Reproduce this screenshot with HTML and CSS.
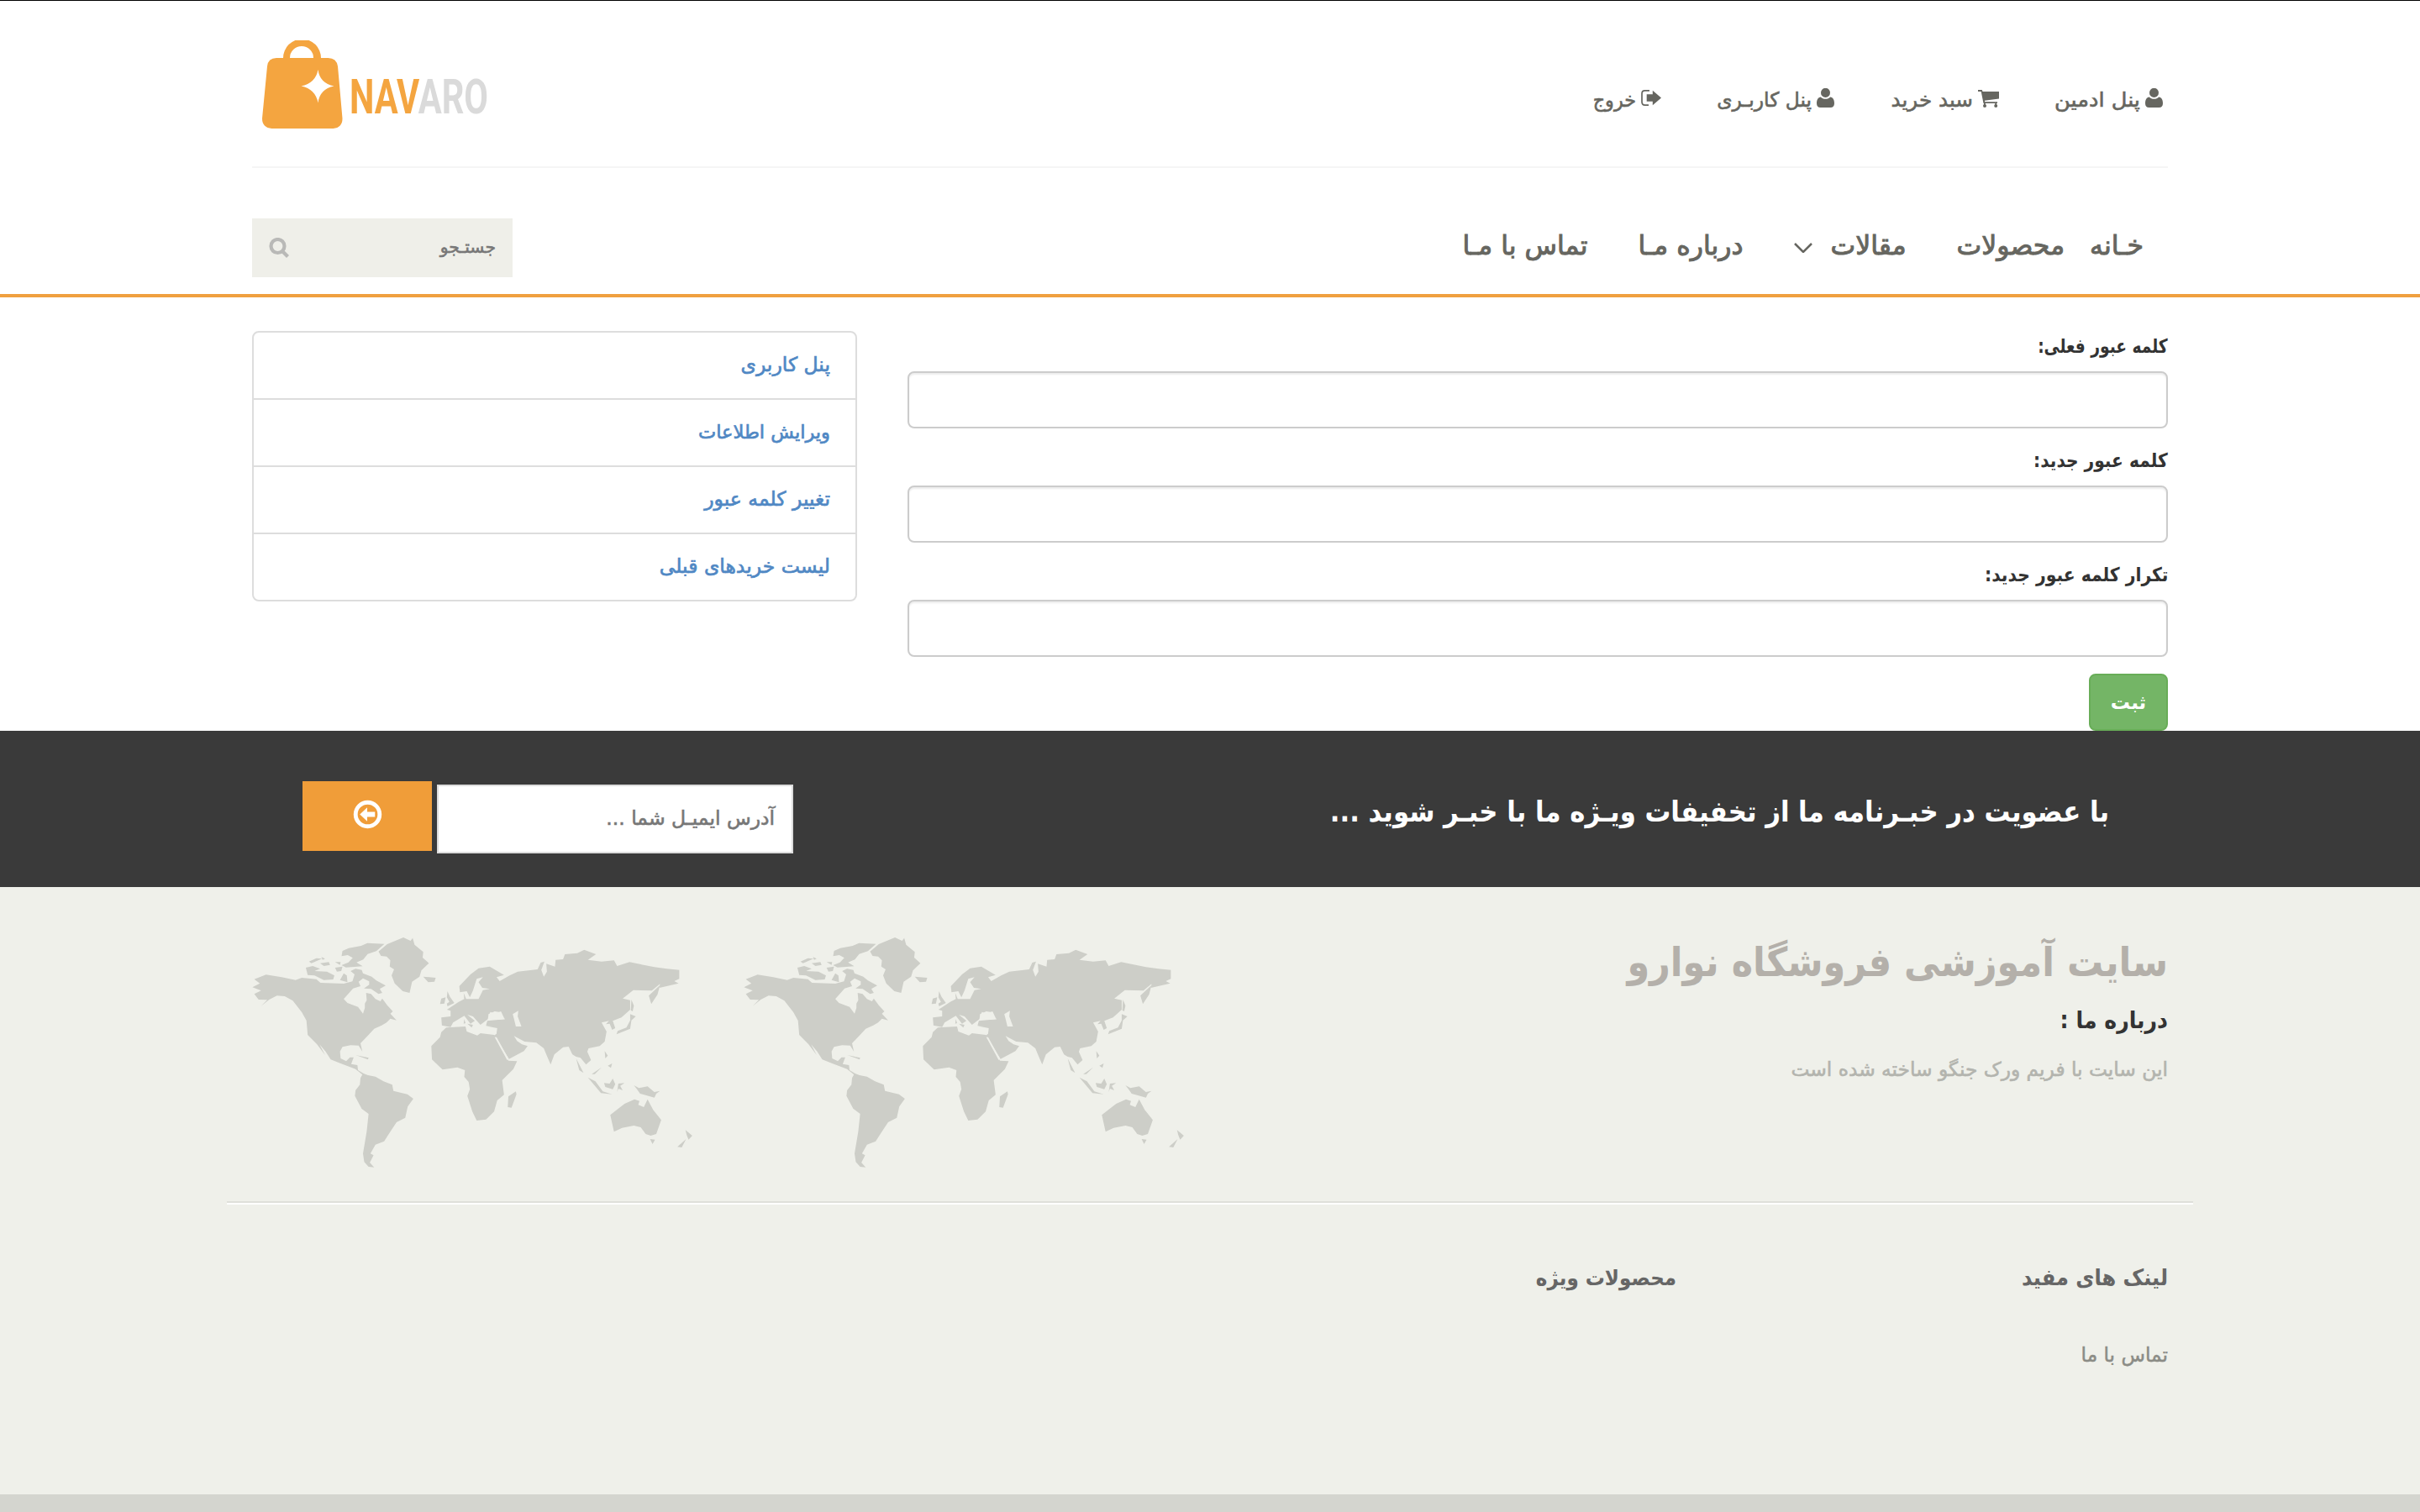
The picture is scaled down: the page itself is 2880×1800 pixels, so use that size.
FILE: index.html
```html
<!DOCTYPE html>
<html lang="fa" dir="rtl">
<head>
<meta charset="utf-8">
<title>NAVARO</title>
<link rel="stylesheet" href="styles.css">
</head>
<body>
<svg class="defs" aria-hidden="true">
  <symbol id="user" viewBox="0 0 21 23"><ellipse cx="10.5" cy="5.4" rx="5.5" ry="5.6"/><path d="M4.8 10.4C1.8 10.6 0 13.600 0 18c0 3.200 1.700 5 4.500 5h12c2.800 0 4.500-1.800 4.500-5 0-4.400-1.800-7.400-4.800-7.600-1.500 1.500-3.400 2.300-5.700 2.300s-4.200-.8-5.700-2.300z"/></symbol>
  <symbol id="cart" viewBox="0 0 25 21"><path d="M0 0h4.800l.7 2H25v8.600L7.900 12.700l.3 1.600H23v1.800H6.500L3.700 1.900H0z"/><circle cx="8" cy="19" r="2"/><circle cx="21.200" cy="19" r="2"/><path d="M7 15h1.800v3H7zM20.300 15h1.800v3h-1.800z"/></symbol>
  <symbol id="exit" viewBox="0 0 24 19"><path d="M10 .9H4.500Q1 .9 1 4.500v9.700q0 3.900 3.500 3.900H9" fill="none" stroke="currentColor" stroke-width="1.700"/><path d="M6.700 5.300h7.100V.8L24 9.500l-10.200 8.700v-4.500H6.700z"/></symbol>
  <symbol id="world" viewBox="55 48 1420 822" preserveAspectRatio="none">
    <path d="M62 197L100 181 150 190 195 200 215 192 262 197 275 210 350 213 378 205 385 180 372 168 388 160 408 164 412 176 440 188 455 202 485 220 466 232 474 246 462 250 438 232 415 230 432 217 432 205 412 194 398 206 404 222 380 230 350 268 362 282 396 296 412 320 418 300 418 284 424 272 422 246 438 250 452 268 468 276 474 266 490 290 508 312 500 320 520 344 500 338 488 352 472 362 448 374 428 398 404 426 410 456 398 434 372 433 346 439 338 455 340 480 358 490 370 476 382 476 374 500 394 504 396 522 414 534 428 540 452 545 478 562 506 574 510 596 555 608 574 624 556 652 548 692 520 708 492 755 480 776 452 788 436 820 446 826 434 852 448 869 430 867 416 850 412 820 424 740 430 678 408 660 386 614 388 594 402 574 404 550 410 538 388 518 340 498 308 484 292 456 272 430 290 468 264 430 234 396 230 345 215 315 186 274 160 258 135 256 110 270 84 293 104 271 76 270 62 250 84 238 56 226 80 212z"/>
    <path d="M462 98L490 72 542 48 565 60 572 50 578 74 606 100 604 120 624 140 600 166 594 188 570 206 562 246 540 240 514 212 504 184 512 162 498 152 500 130 488 116 470 114zM606 188l40 4-4 14-20 2zM228 156l22-6 24 10-18 8 40 2 24 14-4 14-30 2-30-16-22-2zM238 134l24-12 18 2-34 16zM274 140l28-4 4 10-20 4zM278 118l12 6-8 4zM322 136l18 0-2 10zM322 156l24-4-4 16-14 2zM350 176l10 8 2 24-24-8zM346 96l20-10 40-8 20-10 55 3-26 26-28 10-14 20-22 10 20 14-54 4-14-8 22-10 14-16-16-10-20 4z"/>
    <path d="M664 334L694 330 694 310 682 306 720 278 738 268 736 246 744 268 784 268 798 236 820 232 796 228 784 208 798 190 778 196 766 238 756 262 746 240 724 244 722 222 758 180 784 158 820 152 866 182 842 190 852 204 884 184 910 170 974 162 984 138 996 134 986 164 994 188 1004 170 1002 142 1030 152 1032 128 1056 126 1062 108 1102 104 1124 92 1162 108 1136 128 1180 134 1220 130 1230 150 1270 136 1350 154 1390 160 1430 164 1430 196 1414 204 1428 212 1366 228 1368 214 1342 238 1282 236 1248 266 1272 272 1272 306 1244 334 1216 346 1224 372 1214 378 1206 356 1194 358 1204 346 1180 352 1196 384 1190 420 1174 436 1138 444 1134 456 1146 486 1130 502 1112 478 1098 474 1086 466 1074 438 1056 440 1028 466 1016 502 1002 466 994 444 970 424 932 420 898 400 908 418 924 430 942 436 930 454 882 482 838 406 848 370 808 362 812 346 868 340 856 312 836 320 822 314 814 340 790 360 766 330 748 324 772 346 758 356 738 328 702 352 694 368 666 362z"/>
    <path d="M680 370L742 366 746 384 780 398 790 390 834 396 880 488 908 490 896 518 860 558 866 610 844 630 834 670 808 698 778 702 764 670 748 614 756 590 752 564 738 546 740 522 716 512 668 520 634 484 632 436 660 404 664 386zM806 364L850 364 850 420 834 398 842 392 844 372zM904 598l2 10-16 48-12-2 2-38zM684 240l8 20 14 22-22 12-2-10 8-6-8-16zM664 266l14-4-4 22-14 2zM1368 218l-8 34-20 34-8-30zM1276 270l8 22-4 20-6-4zM1272 322l18 8-14 14-4 30-44 20 4-12 28-12 12-26zM1190 454l10 16-8 10zM1214 498l-4 16-10-8zM1180 512l-22 24-10 0zM1098 480l24 52-14-10zM1136 548l24 14 24 36 30 10-36-4zM1216 552l8 20-8 18-24-8-4-14 18 2zM1234 570l20-2-14 10 8 16-14-6-4 12zM1284 576l16 10 28-6 28 26-6 14-26-8-20-6-10-16zM1350 600l18-4-12 10zM388 468l42 10-2 6-30-12zM738 340l4 14-6 2zM748 356l18 4-4 10z"/>
    <path d="M1208 682L1254 642 1286 626 1302 632 1298 646 1316 654 1328 626 1346 664 1372 700 1356 750 1338 756 1322 750 1306 726 1284 720 1246 728 1220 742zM1336 768l16 2-8 16zM1450 736l22 20-12 14-6-16zM1452 768l-14 30-14-2z"/>
    <g class="sea"><path d="M816 322l20-10 22 4-6 12 18 12-22 2-34 0zM894 322l18-12-2 20 12 36-18 0-6-28zM836 404l6 0 38 76-4 6z"/></g>
  </symbol>
</svg>

<header class="header">
  <div class="container">
    <div class="topbar">
      <nav class="links">
        <a><svg class="i-user"><use href="#user"/></svg><span class="w-admin">پنل ادمین</span></a>
        <a><svg class="i-cart"><use href="#cart"/></svg><span class="w-basket">سبد خرید</span></a>
        <a><svg class="i-user"><use href="#user"/></svg><span class="w-panel">پنل کاربـری</span></a>
        <a><svg class="i-exit"><use href="#exit"/></svg><span class="w-exit">خروج</span></a>
      </nav>
      <svg class="logo" viewBox="0 0 280 110">
        <path class="bag" fill-rule="evenodd" d="M25 21a22.500 22.500 0 0 1 45 0h8.500q10 0 11.500 10l5.500 62q0 11-11 12H11.500Q0 104 0 93L6 31q1-10 11-10zm8 0h28a14 14 0 0 0-28 0z"/>
        <path class="star" d="M66.500 35q2 16 19 19.500-17 3.500-19 20-3-16.500-20-20 17-3.500 20-19.500z"/>
        <text x="104" y="87" textLength="165" lengthAdjust="spacingAndGlyphs">NAV<tspan>ARO</tspan></text>
      </svg>
    </div>
    <div class="menubar">
      <ul class="menu">
        <li>خـانه</li>
        <li class="near">محصولات</li>
        <li>مقالات<svg class="chevron" viewBox="0 0 22 12"><path d="M1 1l10 10L21 1"/></svg></li>
        <li>درباره مـا</li>
        <li>تماس با مـا</li>
      </ul>
      <div class="search"><span>جستـجو</span>
        <svg viewBox="0 0 24 24"><circle cx="10.500" cy="10" r="8"/><path d="M16 16l6.500 6.500"/></svg>
      </div>
    </div>
  </div>
</header>

<main class="container main">
  <form class="form">
    <label><span class="w-l1">کلمه عبور فعلی:</span></label><input type="password">
    <label><span class="w-l2">کلمه عبور جدید:</span></label><input type="password">
    <label><span class="w-l3">تکرار کلمه عبور جدید:</span></label><input type="password">
    <button class="submit" type="button">ثبت</button>
  </form>
  <ul class="side">
    <li>پنل کاربری</li>
    <li class="tight">ویرایش اطلاعات</li>
    <li>تغییر کلمه عبور</li>
    <li>لیست خریدهای قبلی</li>
  </ul>
</main>

<section class="news">
  <div class="container news-row">
    <h2>با عضویت در خبـرنامه ما از تخفیفات ویـژه ما با خبـر شوید ...</h2>
    <div class="subscribe">
      <div class="email">آدرس ایمیـل شما ...</div>
      <div class="go"><svg viewBox="0 0 36 36"><circle cx="18" cy="18" r="14.700"/><path d="M8.500 18l9-8.500v5.500h9.500v6h-9.500v5.500z"/></svg></div>
    </div>
  </div>
</section>

<footer class="footer">
  <div class="container about-row">
    <div class="about">
      <h1>سایت آموزشی فروشگاه نوارو</h1>
      <h3>درباره ما :</h3>
      <p>این سایت با فریم ورک جنگو ساخته شده است</p>
    </div>
    <svg class="map"><use href="#world"/></svg>
    <svg class="map"><use href="#world"/></svg>
  </div>
  <div class="rule"></div>
  <div class="container cols">
    <div class="col"><h4 class="wide">لینک های مفید</h4><a>تماس با ما</a></div>
    <div class="col"><h4>محصولات ویژه</h4></div>
  </div>
</footer>
<div class="bottom"></div>
</body>
</html>
```
FILE: styles.css
```css
* { box-sizing: border-box; margin: 0; padding: 0; }
html, body { height: 1800px; overflow: hidden; }
body {
  background: #fff;
  color: #333;
  font-family: "DejaVu Sans", sans-serif;
  font-size: 24px;
  white-space: nowrap;
  border-top: 1px solid #000;
}
ul { list-style: none; }
svg { display: block; flex: none; fill: currentColor; }
.defs { position: absolute; width: 0; height: 0; }
.container { width: 2280px; margin: 0 auto; }

/* header */
.header { height: 353px; border-bottom: 4px solid #f0a03f; }
.topbar {
  display: flex;
  justify-content: space-between;
  height: 199px;
  padding: 0 6px 0 12px;
  border-bottom: 2px solid #f5f5f5;
}
.links { display: flex; gap: 66.500px; padding-top: 103px; color: #666660; }
.links a { display: flex; gap: 6px; height: 30px; line-height: 30px; -webkit-text-stroke: .6px; }
.links span { transform-origin: right; }
.i-user { width: 21px; height: 23px; margin-top: 1px; }
.i-cart { width: 25px; height: 21px; margin-top: 3px; }
.i-exit { width: 24px; height: 19px; margin-top: 3px; }
.w-admin { width: 102px; transform: scaleX(1.068); }
.w-basket { width: 98px; transform: scaleX(1.026); }
.w-panel { width: 113px; transform: scaleX(.974); }
.w-exit { width: 51px; transform: scaleX(.93); }
.logo { width: 280px; height: 110px; margin-top: 47px; direction: ltr; }
.bag { fill: #f4a540; }
.star { fill: #fff; }
.logo text { font: 700 57px Roboto, sans-serif; fill: #f4a540; }
.logo tspan { fill: #dadada; }

.menubar { display: flex; justify-content: space-between; height: 150px; padding-right: 29px; }
.menu {
  display: flex;
  align-items: flex-start;
  gap: 60px;
  padding-top: 72px;
  font-size: 31.500px;
  line-height: 40px;
  color: #666660;
  -webkit-text-stroke: 1px;
}
.menu li { display: flex; align-items: center; height: 40px; }
.menu .near { margin-right: -30px; }
.chevron { width: 22px; height: 12px; margin-right: 22px; margin-top: 6px; }
.chevron path { fill: none; stroke: currentColor; stroke-width: 2.5; }
.search {
  display: flex;
  justify-content: space-between;
  width: 310px;
  height: 70px;
  margin-top: 60px;
  padding: 0 20px;
  background: #efefe9;
  color: #777;
  font-size: 20.300px;
  line-height: 69px;
  -webkit-text-stroke: .6px;
}
.search svg { width: 24px; height: 24px; margin-top: 23px; }
.search svg * { fill: none; stroke: #b9b9b7; stroke-width: 4.200; }

/* account page */
.main { display: flex; justify-content: space-between; align-items: flex-start; height: 516px; }
.form { display: flex; flex-direction: column; align-items: stretch; width: 1500px; padding-top: 40px; }
.form label {
  height: 48px;
  font: 700 23px/37px "DejaVu Sans Condensed", "DejaVu Sans", sans-serif;
  font-stretch: condensed;
}
.form label span { display: inline-block; transform-origin: right; }
.w-l1 { transform: scaleX(.9); }
.w-l2 { transform: scaleX(.975); }
.w-l3 { transform: scaleX(.982); }
.form input {
  height: 68px;
  margin-bottom: 20px;
  border: 2px solid #ccc;
  border-radius: 8px;
  box-shadow: inset 0 2px 2px rgba(0, 0, 0, .075);
}
.submit {
  width: 94px;
  height: 68px;
  border: 2px solid #68ad58;
  border-radius: 8px;
  background: #74b566;
  color: #fff;
  font: 700 23px/62px "DejaVu Sans", sans-serif;
}
.side { width: 720px; margin-top: 40px; border: 2px solid #ddd; border-radius: 8px; color: #5088c4; font-size: 23.500px; }
.side li { height: 80px; padding-right: 30px; line-height: 76px; -webkit-text-stroke: .7px; }
.side li + li { border-top: 2px solid #ddd; }
.side li:first-child { height: 78px; }
.side .tight { font-size: 22.500px; }

/* newsletter */
.news { height: 186px; background: #3a3a3a; }
.news-row { display: flex; justify-content: space-between; padding: 60px 70px 0 60px; }
.news h2 {
  color: #fff;
  font: 700 34.200px/73px "DejaVu Sans Condensed", "DejaVu Sans", sans-serif;
  font-stretch: condensed;
}
.subscribe { display: flex; gap: 6px; }
.email {
  width: 424px;
  height: 82px;
  margin-top: 4px;
  padding-right: 20px;
  border: 2px solid #ddd;
  background: #fff;
  color: #777;
  font-size: 23.500px;
  line-height: 76px;
  -webkit-text-stroke: .6px;
}
.go { display: flex; justify-content: center; width: 154px; height: 83px; background: #f09d39; color: #fff; }
.go svg { width: 35px; height: 35px; margin-top: 22px; }
.go circle { fill: none; stroke: #fff; stroke-width: 5; }

/* footer */
.footer { height: 723px; background: #eff0ea; }
.about-row { display: flex; gap: 60px; height: 374px; padding-top: 60px; }
.about { width: 1170px; }
.about h1 {
  height: 70px;
  color: #b4b0aa;
  font: 700 47.800px/60px "DejaVu Sans Condensed", "DejaVu Sans", sans-serif;
  font-stretch: condensed;
}
.about h3 {
  height: 60px;
  font: 700 28px/57px "DejaVu Sans Condensed", "DejaVu Sans", sans-serif;
  font-stretch: condensed;
}
.about p { color: #b3b4ae; font-size: 23.300px; line-height: 53px; -webkit-text-stroke: .6px; }
.map { width: 525px; height: 274px; color: #cdcec8; }
.sea { fill: #eff0ea; }
.rule { width: 2340px; height: 4px; margin: 0 auto; background: #dfe0da; border-bottom: 2px solid #fff; }
.cols { display: flex; padding-top: 68px; }
.col { width: 585px; }
.col h4 {
  color: #666;
  font: 700 25.600px/38px "DejaVu Sans Condensed", "DejaVu Sans", sans-serif;
  font-stretch: condensed;
}
.col .wide { font-size: 26.800px; }
.col a { display: block; margin-top: 53px; color: #8b8c86; font-size: 23.300px; line-height: 40px; -webkit-text-stroke: .5px; }
.bottom { height: 21px; background: #d4d5cf; }
```
